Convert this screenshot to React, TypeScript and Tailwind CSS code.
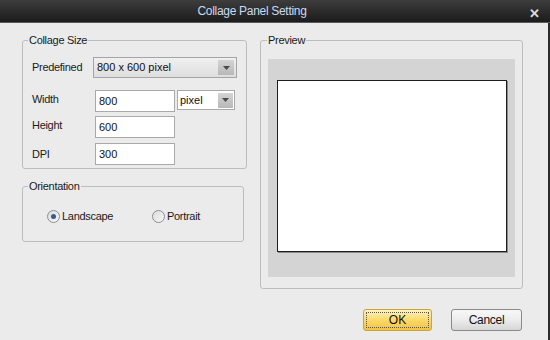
import React, { useState } from 'react';

const font = { fontFamily: '"Liberation Sans", Arial, sans-serif' };

const Arrow: React.FC = () => (
  <svg width="7" height="4" viewBox="0 0 7 4">
    <path d="M0 0h7L3.5 4z" fill="#4a4a4a" />
  </svg>
);

const Radio: React.FC<{ checked: boolean; label: string; onClick: () => void }> = ({ checked, label, onClick }) => (
  <button onClick={onClick} className="flex items-center gap-[2px] text-[11px] tracking-[-0.3px] text-[#1a1a1a]">
    <span className="w-[13px] h-[13px] rounded-full border border-[#8e8f8f] bg-gradient-to-br from-[#dcdcdc] to-[#f7f7f7] flex items-center justify-center">
      {checked && <span className="w-[5px] h-[5px] rounded-full bg-[#3a5a8c]" />}
    </span>
    <span>{label}</span>
  </button>
);

const App: React.FC = () => {
  const [orient, setOrient] = useState<'landscape' | 'portrait'>('landscape');

  const label = 'text-[11px] tracking-[-0.3px] text-[#1a1a1a]';
  const legend = '-ml-[4px] px-[1px] text-[11px] tracking-[-0.3px] text-[#1a1a1a] leading-[14px]';
  const input = 'w-[80px] h-[22px] border border-[#a9a9a9] bg-white px-[3px] text-[11px] text-[#111] outline-none';

  return (
    <div className="w-[550px] h-[340px] bg-[#ebebeb] flex flex-col overflow-hidden" style={font}>
      {/* title bar */}
      <div className="h-[23px] shrink-0 bg-gradient-to-b from-[#3d3d3d] to-[#1c1c1c] border-b border-[#5a5a5a] relative flex items-center justify-center pr-[46px]">
        <span className="text-[12px] tracking-[-0.3px] text-[#c9dbf3]">Collage Panel Setting</span>
        <span className="absolute right-[10px] top-[4px] text-[13px] font-bold text-[#dcdcdc]">✕</span>
      </div>

      <div className="flex-1 flex flex-col border-r-2 border-[#2b2b2b] pl-[22px] pr-[26px] pt-[10px]">
        <div className="flex gap-[16px]">
          {/* left column */}
          <div className="w-[222px] flex flex-col gap-[10px]">
            <fieldset className="border border-[#bdbdbd] rounded-[3px] h-[136px] px-[9px] pt-[3px]">
              <legend className={legend}>Collage Size</legend>
              <div className="flex items-center h-[21px] mt-[7px]">
                <span className={`w-[61px] ${label}`}>Predefined</span>
                <div className="w-[144px] h-[21px] border border-[#a5a5a5] bg-gradient-to-b from-[#f0f0f0] to-[#dedede] flex items-center">
                  <span className="flex-1 pl-[3px] text-[11px] text-[#111]">800 x 600 pixel</span>
                  <span className="w-[16px] h-[15px] mr-[2px] bg-gradient-to-b from-[#d4d4d4] to-[#b8b8b8] flex items-center justify-center">
                    <Arrow />
                  </span>
                </div>
              </div>
              <div className="flex items-start mt-[12px]">
                <span className={`w-[63px] pt-[1px] ${label}`}>Width</span>
                <input defaultValue="800" className={input} />
                <div className="ml-[2px] w-[58px] h-[20px] border border-[#a9a9a9] bg-white flex items-center">
                  <span className="flex-1 pl-[2px] text-[11px] text-[#111]">pixel</span>
                  <span className="w-[15px] h-[15px] mr-[1px] bg-gradient-to-b from-[#d4d4d4] to-[#b8b8b8] flex items-center justify-center">
                    <Arrow />
                  </span>
                </div>
              </div>
              <div className="flex items-start mt-[4px]">
                <span className={`w-[63px] pt-[1px] ${label}`}>Height</span>
                <input defaultValue="600" className={input} />
              </div>
              <div className="flex items-center mt-[5px]">
                <span className={`w-[63px] ${label}`}>DPI</span>
                <input defaultValue="300" className={input} />
              </div>
            </fieldset>

            <fieldset className="border border-[#bdbdbd] rounded-[3px] h-[63px] px-[9px]">
              <legend className={legend}>Orientation</legend>
              <div className="flex items-center pl-[15px] mt-[15px]">
                <div className="w-[105px]">
                  <Radio checked={orient === 'landscape'} label="Landscape" onClick={() => setOrient('landscape')} />
                </div>
                <Radio checked={orient === 'portrait'} label="Portrait" onClick={() => setOrient('portrait')} />
              </div>
            </fieldset>
          </div>

          {/* right column */}
          <fieldset className="w-[262px] h-[256px] border border-[#bdbdbd] rounded-[3px] px-[7px]">
            <legend className="-ml-[1px] px-[1px] text-[11px] tracking-[-0.3px] text-[#1a1a1a] leading-[14px]">Preview</legend>
            <div className="mt-[12px] w-[247px] h-[218px] bg-[#d4d4d4] pl-[9px] pt-[21px]">
              <div className="w-[230px] h-[172px] bg-white border border-[#1e1e1e] shadow-[1px_1px_0_#8a8a8a]" />
            </div>
          </fieldset>
        </div>

        <div className="flex justify-end gap-[19px] mt-[20px]">
          <button className="w-[69px] h-[22px] rounded-[3px] border border-[#c9a43c] bg-gradient-to-b from-[#fff3b8] via-[#fcd968] to-[#f5c13c] p-[2px]">
            <span className="w-full h-full border border-dotted border-[#555] flex items-center justify-center text-[12px] text-[#111]">
              OK
            </span>
          </button>
          <button className="w-[71px] h-[22px] rounded-[3px] border border-[#8a8a8a] bg-gradient-to-b from-[#f8f8f8] via-[#ececec] to-[#d6d6d6] text-[12px] tracking-[-0.3px] text-[#111]">
            Cancel
          </button>
        </div>
      </div>
    </div>
  );
};

export default App;
